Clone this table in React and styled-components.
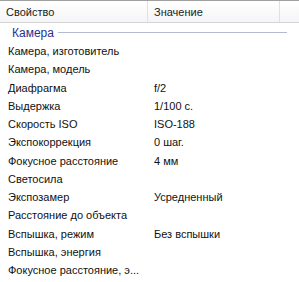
import React from "react";
import styled, { createGlobalStyle } from "styled-components";

const Global = createGlobalStyle`
  html, body { margin: 0; padding: 0; background: #fff; }
  body { font-family: "Liberation Sans", Arial, sans-serif; font-size: 11px; color: #000; }
`;

const Panel = styled.div`
  width: 299px;
  height: 282px;
  overflow: hidden;
  background: #fff;
  border-top: 1px solid #a0a0a0;
  box-sizing: border-box;
`;

const Header = styled.div`
  display: grid;
  grid-template-columns: 148px 132px 1fr;
  height: 21px;
  background: linear-gradient(#ffffff, #f4f5f7);
  border-bottom: 1px solid #d5d5d5;
`;

const HeadCell = styled.div`
  display: flex;
  align-items: center;
  padding-left: ${p => p.$pad}px;
  border-right: ${p => (p.$last ? "none" : "1px solid #e0e1e3")};
  font-family: "Liberation Sans", Arial, sans-serif;
  font-size: 11px;
  color: #1a1a1a;
`;

const Group = styled.div`
  display: flex;
  align-items: center;
  height: 19px;
  padding-left: 12px;
  padding-right: 12px;
  gap: 4px;
  color: #1e3296;
  font-family: "Liberation Sans", Arial, sans-serif;
  font-size: 12px;
`;

const GroupLine = styled.div`
  flex: 1;
  height: 1px;
  background: #b3bccf;
`;

const Row = styled.div`
  display: grid;
  grid-template-columns: 146px 1fr;
  height: 18.25px;
  align-items: center;
  font-family: "Liberation Sans", Arial, sans-serif;
  font-size: 11px;
  color: #111;
`;

const Cell = styled.div`
  padding-left: ${p => p.$pad}px;
  white-space: nowrap;
`;

const rows = [
  ["Камера, изготовитель", ""],
  ["Камера, модель", ""],
  ["Диафрагма", "f/2"],
  ["Выдержка", "1/100 с."],
  ["Скорость ISO", "ISO-188"],
  ["Экспокоррекция", "0 шаг."],
  ["Фокусное расстояние", "4 мм"],
  ["Светосила", ""],
  ["Экспозамер", "Усредненный"],
  ["Расстояние до объекта", ""],
  ["Вспышка, режим", "Без вспышки"],
  ["Вспышка, энергия", ""],
  ["Фокусное расстояние, э...", ""],
];

export default function App() {
  return (
    <>
      <Global />
      <Panel>
        <Header>
          <HeadCell $pad={6}>Свойство</HeadCell>
          <HeadCell $pad={6}>Значение</HeadCell>
          <HeadCell $last $pad={0} />
        </Header>
        <Group>
          Камера
          <GroupLine />
        </Group>
        {rows.map(([k, v]) => (
          <Row key={k}>
            <Cell $pad={8}>{k}</Cell>
            <Cell $pad={8}>{v}</Cell>
          </Row>
        ))}
      </Panel>
    </>
  );
}
